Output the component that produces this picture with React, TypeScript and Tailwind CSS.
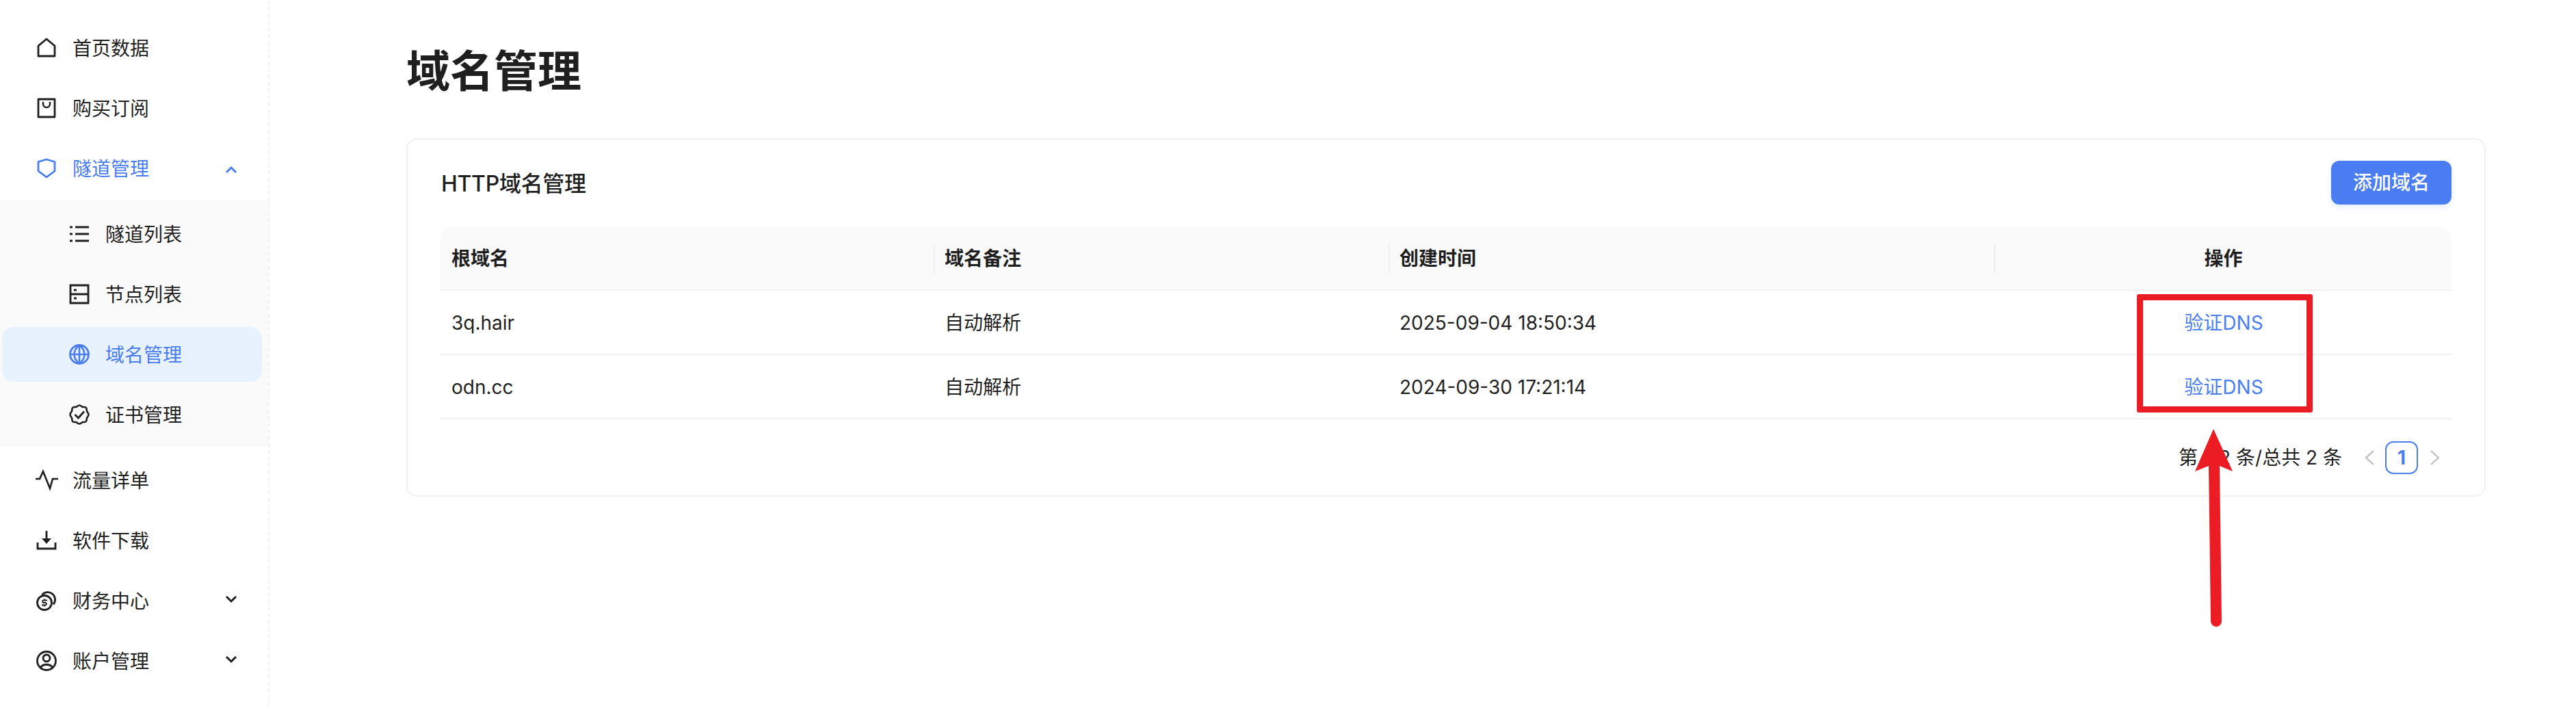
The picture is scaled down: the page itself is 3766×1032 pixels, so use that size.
import type { ReactNode } from "react";

const font = { fontFamily: '"Inter", "Noto Sans CJK SC", sans-serif' };

function Ico({ children, className = "" }: { children: ReactNode; className?: string }) {
  return (
    <svg viewBox="0 0 30 30" fill="none" stroke="currentColor" strokeWidth="2.8" className={"w-[30px] h-[30px] shrink-0 overflow-visible " + className}>
      {children}
    </svg>
  );
}

const icons: Record<string, ReactNode> = {
  home: <path d="M3 27V12L15 2l12 10v15z" strokeLinejoin="round" />,
  bag: (
    <>
      <path d="M3 2h24v26H3z" strokeLinejoin="round" />
      <path d="M10 6v3a5 5 0 0 0 10 0V6" strokeWidth="2.5" />
    </>
  ),
  shield: <path d="M15 2l12 3.5V19L15 28 3 19V5.5z" strokeLinejoin="round" />,
  list: (
    <>
      <path d="M9 5h20M9 15h20M9 25h20" />
      <path d="M1 5h4M1 15h4M1 25h4" />
    </>
  ),
  node: (
    <>
      <path d="M2 2h26v26H2zM2 15h26" />
      <path d="M7 9h4M7 21h4" />
    </>
  ),
  globe: (
    <>
      <circle cx="15" cy="15" r="13.5" />
      <path d="M1.5 15h27M15 1.5v27M15 1.5c-10 8-10 19 0 27M15 1.5c10 8 10 19 0 27" strokeWidth="2.6" />
    </>
  ),
  badge: (
    <>
      <path d="M15 1.5c2.400 0 3 2 5 2.400 2 .3 3.700-.6 4.900 1.200 1.200 1.700.4 3.400 1.200 5 .8 1.700 2.400 2.600 2.400 4.900s-1.600 3.200-2.400 4.900c-.8 1.600 0 3.300-1.200 5-1.200 1.800-2.900.9-4.900 1.200-2 .4-2.600 2.400-5 2.400s-3-2-5-2.400c-2-.3-3.700.6-4.900-1.200-1.200-1.700-.4-3.400-1.200-5C3.100 18.200 1.500 17.300 1.500 15s1.600-3.200 2.400-4.900c.8-1.600 0-3.300 1.200-5C6.300 3.300 8 4.200 10 3.900c2-.4 2.600-2.400 5-2.400z" strokeWidth="2.6" />
      <path d="M8.500 15l5 5L22 10.500" />
    </>
  ),
  activity: <path d="M-1 13h6l5-11 10 25 4-14h8" strokeWidth="2.6" />,
  download: (
    <>
      <path d="M2 18v9h26v-9" />
      <path d="M15 1v12" />
      <path d="M8 12h14l-7 8z" fill="currentColor" stroke="none" />
    </>
  ),
  coins: (
    <>
      <circle cx="12" cy="18" r="10.500" />
      <path d="M8.500 6.500A10.500 10.500 0 1 1 25 20.500" />
      <path d="M16 14.500h-5.500a1.800 1.800 0 0 0 0 3.500h3a1.800 1.800 0 0 1 0 3.500H8M12 12.500v2M12 21.500v2" strokeWidth="2" />
    </>
  ),
  user: (
    <>
      <circle cx="15" cy="15" r="13.500" />
      <circle cx="15" cy="11" r="5" />
      <path d="M6 25.500c1.500-3.500 5-5 9-5s7.500 1.500 9 5" />
    </>
  ),
};

function Chevron({ up }: { up?: boolean }) {
  return (
    <svg viewBox="0 0 18 12" fill="none" stroke="currentColor" strokeWidth="3" className={"w-[18px] h-[12px] ml-auto mr-[45px] " + (up ? "mt-1" : "mb-1")}>
      <path d={up ? "M2 10l7-7 7 7" : "M2 2l7 7 7-7"} />
    </svg>
  );
}

function Item({ icon, label, blue, chev }: { icon: string; label: string; blue?: boolean; chev?: "up" | "down" }) {
  return (
    <div className={"h-20 flex items-center pl-[53px] " + (blue ? "text-[#4a7df0]" : "text-[#1f1f1f]")}>
      <Ico>{icons[icon]}</Ico>
      <span className="ml-[23px] pt-[2px] text-[28px]">{label}</span>
      {chev && <Chevron up={chev === "up"} />}
    </div>
  );
}

function Sub({ icon, label, active }: { icon: string; label: string; active?: boolean }) {
  return (
    <div
      className={
        "h-20 flex items-center pl-[98px] ml-[3px] mr-[9px] rounded-2xl " +
        (active ? "bg-[#e8f2ff] text-[#4a7df0]" : "text-[#1f1f1f]")
      }
    >
      <Ico>{icons[icon]}</Ico>
      <span className="ml-[23px] pt-[2px] text-[28px]">{label}</span>
    </div>
  );
}

function Sidebar() {
  return (
    <aside className="w-[394px] h-[1032px] shrink-0 border-r-2 border-dashed border-[#f0f0f0] pt-[30px] flex flex-col gap-2">
      <Item icon="home" label="首页数据" />
      <Item icon="bag" label="购买订阅" />
      <Item icon="shield" label="隧道管理" blue chev="up" />
      <div className="bg-[#fafafa] mt-[-2px] mb-[2px] pt-[10px] pb-[6px] flex flex-col gap-2">
        <Sub icon="list" label="隧道列表" />
        <Sub icon="node" label="节点列表" />
        <Sub icon="globe" label="域名管理" active />
        <Sub icon="badge" label="证书管理" />
      </div>
      <Item icon="activity" label="流量详单" />
      <Item icon="download" label="软件下载" />
      <Item icon="coins" label="财务中心" chev="down" />
      <Item icon="user" label="账户管理" chev="down" />
    </aside>
  );
}

const columns = "grid grid-cols-[721px_665px_885px_669px]";

function HeadCell({ label, sep, center }: { label: string; sep?: boolean; center?: boolean }) {
  return (
    <div className={"flex items-center h-full " + (sep ? "" : "pl-4")}>
      {sep && <div className="w-[2px] h-[44px] bg-[#f0f0f0] shrink-0" />}
      <span className={center ? "flex-1 text-center" : sep ? "ml-[14px]" : ""}>{label}</span>
    </div>
  );
}

function Row({ domain, note, time }: { domain: string; note: string; time: string }) {
  return (
    <div className={columns + " h-[94px] items-center border-b-2 border-[#f0f0f0] text-[28px] text-[#1f1f1f] pt-[2px]"}>
      <div className="pl-4">{domain}</div>
      <div className="pl-4">{note}</div>
      <div className="pl-4">{time}</div>
      <div className="text-center pl-[3px] text-[#4a7df0]">验证DNS</div>
    </div>
  );
}

function Pagination() {
  return (
    <div className="h-[112px] flex items-center justify-end text-[28px] text-[#1f1f1f]">
      <span>第 1-2 条/总共 2 条</span>
      <svg viewBox="0 0 14 22" fill="none" stroke="#c4c4c4" strokeWidth="2.500" className="w-[14px] h-[22px] ml-[33px]">
        <path d="M13 1L2 11l11 10" />
      </svg>
      <div className="w-12 h-12 ml-[16px] rounded-xl border-2 border-[#4a7df0] text-[#4a7df0] font-bold flex items-center justify-center">
        1
      </div>
      <svg viewBox="0 0 14 22" fill="none" stroke="#c4c4c4" strokeWidth="2.500" className="w-[14px] h-[22px] ml-[18px] mr-[17px]">
        <path d="M1 1l11 10L1 21" />
      </svg>
    </div>
  );
}

function Annotation() {
  return (
    <>
      <div className="absolute left-[3124px] top-[430px] w-[257px] h-[173px] border-[9px] border-[#ec1c24] rounded-[3px]" />
      <svg viewBox="0 0 100 300" className="absolute left-[3190px] top-[620px] w-[100px] h-[300px]" fill="#ec1c24">
        <path d="M46 7L19 69 39 61 42 288a7.500 7.500 0 0 0 16 0L55 61 74 69z" />
      </svg>
    </>
  );
}

export default function App() {
  return (
    <div className="relative flex w-[3766px] h-[1032px] bg-white overflow-hidden" style={font}>
      <Sidebar />
      <main className="flex-1 pl-[200px] pr-[133px] pt-[55px]">
        <h1 className="text-[64px] leading-[96px] font-bold text-[#1f1f1f] pt-[1px] -mb-[1px]">域名管理</h1>
        <section className="mt-[51px] h-[524px] border-2 border-[#f0f0f0] rounded-2xl pt-[31px] px-[48px]">
          <div className="flex items-center justify-between h-16">
            <h2 className="text-[32px] font-medium text-[#1f1f1f] ml-px pt-[3px] tracking-[-0.3px]">HTTP域名管理</h2>
            <button className="w-[176px] h-16 rounded-xl bg-[#4a7df2] text-white text-[28px] font-medium shadow-[0_4px_8px_rgba(74,125,242,0.15)]">
              添加域名
            </button>
          </div>
          <div className={columns + " mt-[33px] h-[93px] items-center bg-[#fafafa] rounded-t-2xl border-b-2 border-[#f0f0f0] text-[28px] font-semibold text-[#1f1f1f]"}>
            <HeadCell label="根域名" />
            <HeadCell label="域名备注" sep />
            <HeadCell label="创建时间" sep />
            <HeadCell label="操作" sep center />
          </div>
          <Row domain="3q.hair" note="自动解析" time="2025-09-04 18:50:34" />
          <Row domain="odn.cc" note="自动解析" time="2024-09-30 17:21:14" />
          <Pagination />
        </section>
      </main>
      <Annotation />
    </div>
  );
}
